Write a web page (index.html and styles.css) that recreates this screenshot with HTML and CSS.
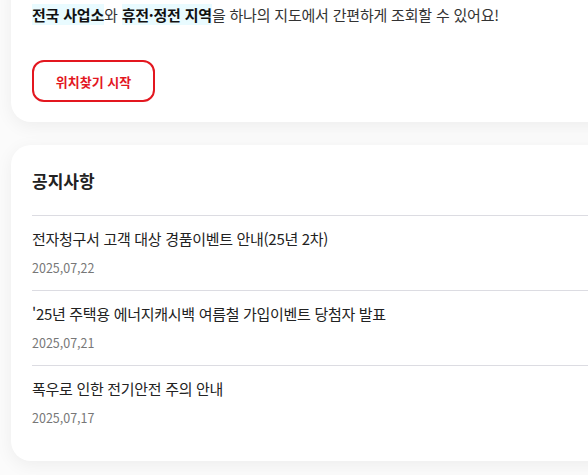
FILE: index.html
```html
<!DOCTYPE html>
<html lang="ko">
<head>
<meta charset="utf-8">
<link rel="stylesheet" href="styles.css">
</head>
<body>
<div class="viewport">
<div class="page">
  <section class="card card-intro">
    <p class="intro"><mark>전국 사업소</mark>와 <mark>휴전·정전 지역</mark>을 하나의 지도에서 간편하게 조회할 수 있어요!</p>
    <button class="btn-start" type="button">위치찾기 시작</button>
  </section>
  <section class="card card-notice">
    <h2 class="notice-title">공지사항</h2>
    <ul class="notice-list">
      <li class="notice-item">
        <div class="notice-name">전자청구서 고객 대상 경품이벤트 안내(25년 2차)</div>
        <div class="notice-date">2025,07,22</div>
      </li>
      <li class="notice-item">
        <div class="notice-name">'25년 주택용 에너지캐시백 여름철 가입이벤트 당첨자 발표</div>
        <div class="notice-date">2025,07,21</div>
      </li>
      <li class="notice-item">
        <div class="notice-name">폭우로 인한 전기안전 주의 안내</div>
        <div class="notice-date">2025,07,17</div>
      </li>
    </ul>
  </section>
</div>
</div>
</body>
</html>
```

FILE: styles.css
```css
* { box-sizing: border-box; }
html, body {
  margin: 0;
  padding: 0;
  background: #fbfbfb;
}
body {
  font-family: "Noto Sans CJK KR", "Noto Sans", sans-serif;
  color: #222;
}
.viewport {
  width: 100%;
  height: 100vh;
  overflow: hidden;
}
.page {
  display: flex;
  flex-direction: column;
  gap: 23px;
  padding-left: 11px;
  margin-right: -40px;
  margin-top: -30px;
}
.card {
  background: #fff;
  border-radius: 20px;
  box-shadow: 0 4px 18px rgba(0, 0, 0, 0.06);
  padding: 0 21px;
}
.card-intro {
  padding-top: 34px;
  padding-bottom: 20px;
}
.intro {
  margin: 0;
  font-size: 15px;
  line-height: 22px;
  color: #333;
  letter-spacing: -0.2px;
}
.intro mark {
  background: #e9fbff;
  color: #111;
  font-weight: 700;
}
.btn-start {
  display: block;
  margin-top: 34px;
  width: 123px;
  height: 42px;
  border: 2px solid #e3171f;
  border-radius: 12px;
  background: #fff;
  color: #e3171f;
  font-family: inherit;
  font-size: 13px;
  font-weight: 700;
  padding: 0;
}
.card-notice {
  padding-top: 24px;
  padding-bottom: 21px;
}
.notice-title {
  margin: 0 0 22px;
  font-size: 17px;
  line-height: 24px;
  font-weight: 700;
  color: #222;
}
.notice-list {
  list-style: none;
  margin: 0;
  padding: 0;
}
.notice-item {
  border-top: 1px solid #dcdce2;
  padding: 12px 0 13px;
}
.notice-name {
  font-size: 15px;
  line-height: 22px;
  color: #222;
  letter-spacing: -0.3px;
}
.notice-date {
  margin-top: 9px;
  font-size: 12.5px;
  line-height: 18px;
  color: #777;
}
```
